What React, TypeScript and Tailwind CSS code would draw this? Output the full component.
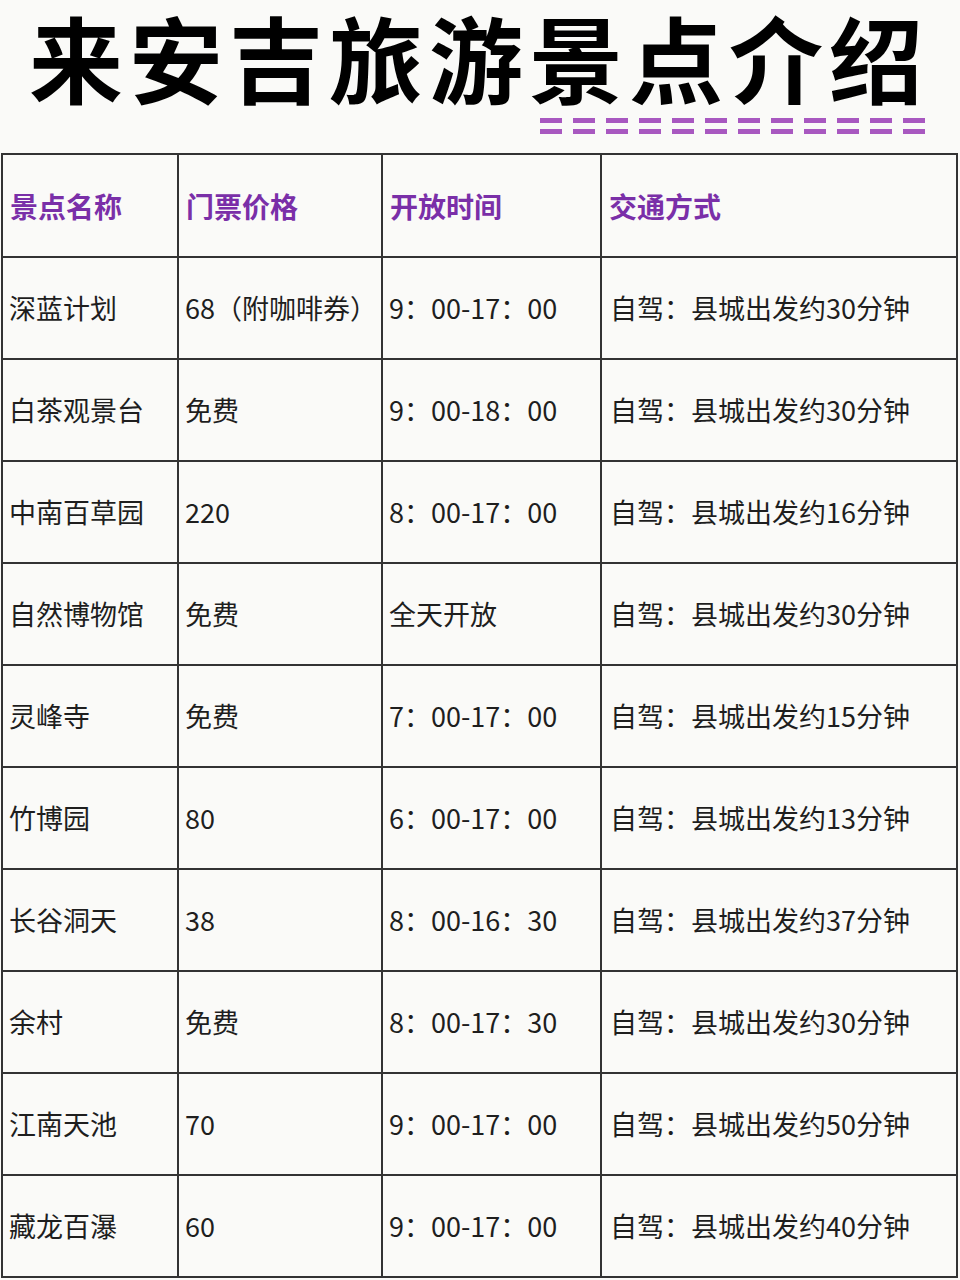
import React from "react";

const rows: [string, string, string, string][] = [
  ["深蓝计划", "68（附咖啡券）", "9：00-17：00", "自驾：县城出发约30分钟"],
  ["白茶观景台", "免费", "9：00-18：00", "自驾：县城出发约30分钟"],
  ["中南百草园", "220", "8：00-17：00", "自驾：县城出发约16分钟"],
  ["自然博物馆", "免费", "全天开放", "自驾：县城出发约30分钟"],
  ["灵峰寺", "免费", "7：00-17：00", "自驾：县城出发约15分钟"],
  ["竹博园", "80", "6：00-17：00", "自驾：县城出发约13分钟"],
  ["长谷洞天", "38", "8：00-16：30", "自驾：县城出发约37分钟"],
  ["余村", "免费", "8：00-17：30", "自驾：县城出发约30分钟"],
  ["江南天池", "70", "9：00-17：00", "自驾：县城出发约50分钟"],
  ["藏龙百瀑", "60", "9：00-17：00", "自驾：县城出发约40分钟"],
];

const headers = ["景点名称", "门票价格", "开放时间", "交通方式"];

export default function App() {
  return (
    <div
      className="w-[960px] h-[1280px] bg-[#fafaf8] overflow-hidden"
      style={{ fontFamily: '"Noto Sans CJK SC", "Noto Sans", sans-serif' }}
    >
      <div className="h-[153px] flex flex-col">
        <div className="pl-[29px] h-[118px]">
          <h1 className="pt-[6px] text-[94px] leading-[100px] font-bold text-black tracking-[6px] whitespace-nowrap">
            来安吉旅游景点介绍
          </h1>
        </div>
        <div className="flex justify-end pr-[35px]">
          <div className="flex flex-col gap-[6px]">
            {[0, 1].map((r) => (
              <div key={r} className="flex gap-[11px]">
                {Array.from({ length: 12 }).map((_, i) => (
                  <div key={i} className="w-[22px] h-[5px] bg-[#a858c0]" />
                ))}
              </div>
            ))}
          </div>
        </div>
      </div>
      <table className="ml-[1px] border-collapse table-fixed w-[955px]">
        <colgroup>
          <col className="w-[176px]" />
          <col className="w-[204px]" />
          <col className="w-[219px]" />
          <col className="w-[356px]" />
        </colgroup>
        <thead>
          <tr className="h-[103px]">
            {headers.map((h) => (
              <th
                key={h}
                className="border-2 border-[#333] text-left align-middle pl-[7px] text-[28px] font-bold text-[#7a2fa8] whitespace-nowrap"
              >
                {h}
              </th>
            ))}
          </tr>
        </thead>
        <tbody>
          {rows.map((r, i) => (
            <tr key={i} className="h-[102px]">
              {r.map((c, j) => (
                <td
                  key={j}
                  className={`border-2 border-[#333] align-middle ${j === 3 ? "pl-[8px]" : "pl-[6px]"} text-[27px] text-[#1e1e1e] whitespace-nowrap overflow-hidden`}
                >
                  {c}
                </td>
              ))}
            </tr>
          ))}
        </tbody>
      </table>
    </div>
  );
}
